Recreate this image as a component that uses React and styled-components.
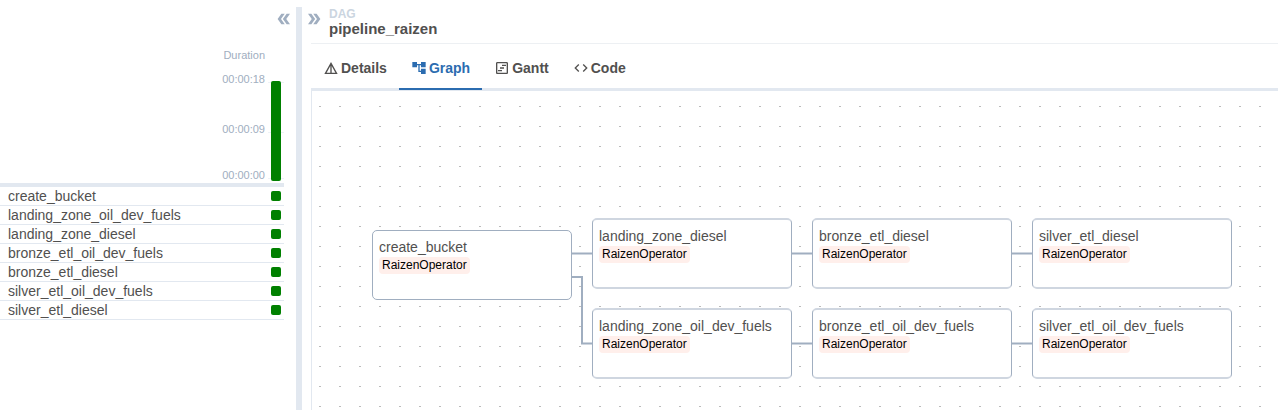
import React, { useState } from "react";
import styled, { createGlobalStyle } from "styled-components";
import { MdDetails, MdAccountTree, MdOutlineViewTimeline, MdCode, MdDoubleArrow } from "react-icons/md";

const line = "#e2e8f0";
const slate = "#a0aec0";
const ink = "#51504f";

const GlobalStyle = createGlobalStyle`
  *, *::before, *::after { box-sizing: border-box; }
  html, body, #root { height: 100%; }
  body {
    margin: 0;
    background: #fff;
    color: ${ink};
    font: 14px/18px "Liberation Sans", Arial, sans-serif;
  }
`;

const Page = styled.main`
  display: flex;
  height: 100%;
  padding-top: 7px;
  overflow: hidden;
`;

const GridPanel = styled.section`
  flex: 0 0 296px;
  display: flex;
  flex-direction: column;
`;

const PanelToggle = styled.button`
  display: flex;
  padding: 0;
  border: 0;
  background: none;
  color: ${slate};
  cursor: pointer;
  svg { transform: ${(p) => (p.$flip ? "rotate(180deg)" : "none")}; }
`;

const GridBar = styled.div`
  display: flex;
  justify-content: flex-end;
  height: 38px;
  padding: 3px 3px 0 0;
`;

const ChartRow = styled.div`
  display: flex;
  justify-content: flex-end;
  height: 142px;
  margin-right: 12px;
  border-bottom: 4px solid ${line};
`;

const Axis = styled.div`
  display: flex;
  flex-direction: column;
  padding-right: 3px;
  color: ${slate};
  font-size: 11px;
  line-height: 14px;
  text-align: right;
`;

const AxisTitle = styled.span`
  margin-top: 3px;
  margin-bottom: 10px;
`;

const AxisLabels = styled.div`
  display: grid;
  grid-template-rows: 50px 46px 14px;
`;

const Plot = styled.div`
  align-self: flex-end;
  display: flex;
  align-items: flex-start;
  justify-content: center;
  width: 16px;
  height: 101px;
  margin-bottom: 1px;
  background: linear-gradient(#edf2f7, #edf2f7) 0 1px / 100% 1px no-repeat,
    linear-gradient(#edf2f7, #edf2f7) 0 51px / 100% 1px no-repeat,
    linear-gradient(#edf2f7, #edf2f7) 0 97px / 100% 1px no-repeat;
`;

const RunBar = styled.button`
  width: 10px;
  height: 100px;
  padding: 0;
  border: 0;
  border-radius: 2px;
  background: #008000;
`;

const TaskTable = styled.table`
  width: 284px;
  border-collapse: separate;
  border-spacing: 0;
  th, td {
    height: 19px;
    padding: 0;
    border-bottom: 1px solid ${line};
    line-height: 18px;
  }
  th {
    padding-left: 8px;
    font-weight: 400;
    text-align: left;
  }
  td { width: 13px; }
`;

const Status = styled.button`
  display: block;
  width: 10px;
  height: 10px;
  padding: 0;
  border: 0;
  border-radius: 2px;
  background: #008000;
`;

const Divider = styled.div`
  flex: 0 0 6px;
  background: ${line};
`;

const DetailPanel = styled.section`
  flex: 1;
  min-width: 0;
  display: flex;
  flex-direction: column;
`;

const Header = styled.header`
  display: flex;
  gap: 6px;
  height: 37px;
  margin-left: 9px;
  border-bottom: 1px solid #edf0f3;
`;

const HeaderToggle = styled.div`
  margin: 3px 0 0 -6px;
`;

const Title = styled.h1`
  margin: 0;
  font-size: 15px;
  line-height: 16px;
`;

const Kicker = styled.span`
  display: block;
  color: #cbd5e0;
  font-size: 12px;
  line-height: 14px;
`;

const Tabs = styled.div`
  display: flex;
  height: 47px;
  margin-left: 9px;
  box-shadow: inset 0 -3px ${line};
`;

const Tab = styled.button`
  display: flex;
  align-items: center;
  gap: 2px;
  padding: 4px 12px 0;
  border: 0;
  border-bottom: 2px solid ${(p) => (p.$active ? "#2b6cb0" : "transparent")};
  margin-bottom: 1px;
  background: none;
  color: ${(p) => (p.$active ? "#2b6cb0" : ink)};
  font: bold 14px/20px "Liberation Sans", Arial, sans-serif;
  cursor: pointer;
`;

const Canvas = styled.div`
  position: relative;
  flex: 1;
  margin-left: 9px;
  border-left: 1px solid ${line};
  overflow: hidden;
  background: conic-gradient(from 90deg at 18px 19px, #bcbcbc 25%, transparent 0) 9px 16px / 20px 20px;
`;

const Edges = styled.svg`
  position: absolute;
  inset: 0;
  width: 100%;
  height: 100%;
`;

const Node = styled.article`
  position: absolute;
  left: ${(p) => p.$x}px;
  top: ${(p) => p.$y}px;
  width: 200px;
  height: ${(p) => (p.$soft ? 71 : 70)}px;
  padding: 7px 6px;
  border: 1px solid ${slate};
  ${(p) => p.$soft && "border-width: 2px 1px; border-top-color: #cfd6e0; border-bottom-color: #cfd6e0;"}
  border-radius: 5px;
  background: #fff;
`;

const NodeName = styled.div`
  margin-bottom: 1px;
  line-height: 18px;
`;

const Operator = styled.span`
  display: inline-block;
  padding: 0 3px;
  border-radius: 4px;
  background: #ffefeb;
  color: #000;
  font-size: 12px;
  line-height: 17px;
  vertical-align: top;
`;

const tasks = [
  "create_bucket",
  "landing_zone_oil_dev_fuels",
  "landing_zone_diesel",
  "bronze_etl_oil_dev_fuels",
  "bronze_etl_diesel",
  "silver_etl_oil_dev_fuels",
  "silver_etl_diesel",
];

const nodes = [
  { name: "create_bucket", x: 60, y: 139 },
  { name: "landing_zone_diesel", x: 280, y: 127, soft: true },
  { name: "bronze_etl_diesel", x: 500, y: 127, soft: true },
  { name: "silver_etl_diesel", x: 720, y: 127, soft: true },
  { name: "landing_zone_oil_dev_fuels", x: 280, y: 217, soft: true },
  { name: "bronze_etl_oil_dev_fuels", x: 500, y: 217, soft: true },
  { name: "silver_etl_oil_dev_fuels", x: 720, y: 217, soft: true },
];

const edges = [
  "M260 162.5H280",
  "M260 186H270V252.5H280",
  "M480 162.5H500",
  "M700 162.5H720",
  "M480 252.5H500",
  "M700 252.5H720",
];

const tabs = [
  { name: "Details", Icon: MdDetails },
  { name: "Graph", Icon: MdAccountTree },
  { name: "Gantt", Icon: MdOutlineViewTimeline },
  { name: "Code", Icon: MdCode },
];

export default function App() {
  const [active, setActive] = useState("Graph");
  return (
    <>
      <GlobalStyle />
      <Page>
        <GridPanel>
          <GridBar>
            <PanelToggle $flip aria-label="Collapse grid">
              <MdDoubleArrow size={18} />
            </PanelToggle>
          </GridBar>
          <ChartRow>
            <Axis>
              <AxisTitle>Duration</AxisTitle>
              <AxisLabels>
                <span>00:00:18</span>
                <span>00:00:09</span>
                <span>00:00:00</span>
              </AxisLabels>
            </Axis>
            <Plot>
              <RunBar aria-label="Run, 18 seconds" />
            </Plot>
          </ChartRow>
          <TaskTable>
            <tbody>
              {tasks.map((t) => (
                <tr key={t}>
                  <th scope="row">{t}</th>
                  <td>
                    <Status aria-label={`${t}: success`} />
                  </td>
                </tr>
              ))}
            </tbody>
          </TaskTable>
        </GridPanel>
        <Divider />
        <DetailPanel>
          <Header>
            <HeaderToggle>
              <PanelToggle aria-label="Collapse details">
                <MdDoubleArrow size={18} />
              </PanelToggle>
            </HeaderToggle>
            <Title>
              <Kicker>DAG</Kicker>
              pipeline_raizen
            </Title>
          </Header>
          <Tabs role="tablist">
            {tabs.map(({ name, Icon }) => (
              <Tab
                key={name}
                role="tab"
                aria-selected={active === name}
                $active={active === name}
                onClick={() => setActive(name)}
              >
                <Icon size={16} />
                {name}
              </Tab>
            ))}
          </Tabs>
          <Canvas>
            <Edges fill="none" stroke={slate} strokeWidth="2" aria-hidden="true">
              {edges.map((d) => (
                <path key={d} d={d} />
              ))}
            </Edges>
            {nodes.map((n) => (
              <Node key={n.name} $x={n.x} $y={n.y} $soft={n.soft}>
                <NodeName>{n.name}</NodeName>
                <Operator>RaizenOperator</Operator>
              </Node>
            ))}
          </Canvas>
        </DetailPanel>
      </Page>
    </>
  );
}
